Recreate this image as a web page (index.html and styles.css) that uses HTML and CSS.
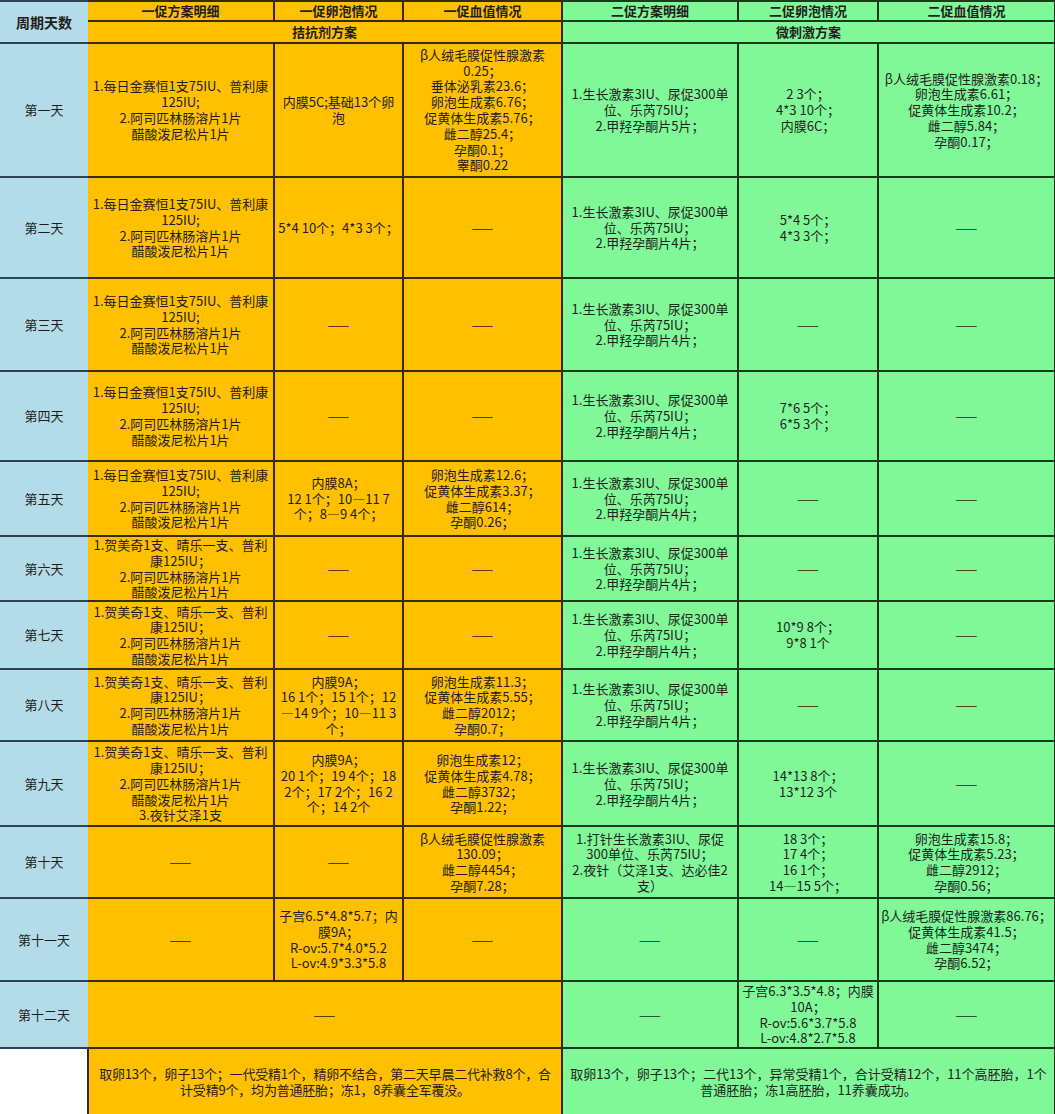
FILE: index.html
```html
<!DOCTYPE html>
<html lang="zh-CN">
<head>
<meta charset="utf-8">
<title>促排方案对比</title>
<link rel="stylesheet" href="styles.css">
</head>
<body>
<table class="sheet">
  <colgroup>
    <col class="w0"><col class="w1"><col class="w2"><col class="w3"><col class="w4"><col class="w5"><col class="w6">
  </colgroup>
  <tr class="rh1">
    <td class="day head" rowspan="2">周期天数</td>
    <td class="o head c1">一促方案明细</td>
    <td class="o head">一促卵泡情况</td>
    <td class="o head">一促血值情况</td>
    <td class="g head">二促方案明细</td>
    <td class="g head">二促卵泡情况</td>
    <td class="g head">二促血值情况</td>
  </tr>
  <tr class="rh2">
    <td class="o head c1" colspan="3">拮抗剂方案</td>
    <td class="g head" colspan="3">微刺激方案</td>
  </tr>
  <tr class="r1">
    <td class="day">第一天</td>
    <td class="o c1">1.每日金赛恒1支75IU、普利康<br>125IU;<br>2.阿司匹林肠溶片1片<br>醋酸泼尼松片1片</td>
    <td class="o">内膜5C;基础13个卵<br>泡</td>
    <td class="o">β人绒毛膜促性腺激素<br>0.25；<br>垂体泌乳素23.6；<br>卵泡生成素6.76；<br>促黄体生成素5.76；<br>雌二醇25.4；<br>孕酮0.1；<br>睾酮0.22</td>
    <td class="g">1.生长激素3IU、尿促300单<br>位、乐芮75IU；<br>2.甲羟孕酮片5片；</td>
    <td class="g">2 3个；<br>4*3 10个；<br>内膜6C；</td>
    <td class="g">β人绒毛膜促性腺激素0.18；<br>卵泡生成素6.61；<br>促黄体生成素10.2；<br>雌二醇5.84；<br>孕酮0.17；</td>
  </tr>
  <tr class="r2">
    <td class="day">第二天</td>
    <td class="o c1">1.每日金赛恒1支75IU、普利康<br>125IU;<br>2.阿司匹林肠溶片1片<br>醋酸泼尼松片1片</td>
    <td class="o">5*4 10个；4*3 3个；</td>
    <td class="o">——</td>
    <td class="g">1.生长激素3IU、尿促300单<br>位、乐芮75IU；<br>2.甲羟孕酮片4片；</td>
    <td class="g">5*4 5个；<br>4*3 3个；</td>
    <td class="g">——</td>
  </tr>
  <tr class="r3">
    <td class="day">第三天</td>
    <td class="o c1">1.每日金赛恒1支75IU、普利康<br>125IU;<br>2.阿司匹林肠溶片1片<br>醋酸泼尼松片1片</td>
    <td class="o">——</td>
    <td class="o">——</td>
    <td class="g">1.生长激素3IU、尿促300单<br>位、乐芮75IU；<br>2.甲羟孕酮片4片；</td>
    <td class="g">——</td>
    <td class="g">——</td>
  </tr>
  <tr class="r4">
    <td class="day">第四天</td>
    <td class="o c1">1.每日金赛恒1支75IU、普利康<br>125IU;<br>2.阿司匹林肠溶片1片<br>醋酸泼尼松片1片</td>
    <td class="o">——</td>
    <td class="o">——</td>
    <td class="g">1.生长激素3IU、尿促300单<br>位、乐芮75IU；<br>2.甲羟孕酮片4片；</td>
    <td class="g">7*6 5个；<br>6*5 3个；</td>
    <td class="g">——</td>
  </tr>
  <tr class="r5">
    <td class="day">第五天</td>
    <td class="o c1">1.每日金赛恒1支75IU、普利康<br>125IU;<br>2.阿司匹林肠溶片1片<br>醋酸泼尼松片1片</td>
    <td class="o">内膜8A；<br>12 1个；10—11 7<br>个；8—9 4个；</td>
    <td class="o">卵泡生成素12.6；<br>促黄体生成素3.37；<br>雌二醇614；<br>孕酮0.26；</td>
    <td class="g">1.生长激素3IU、尿促300单<br>位、乐芮75IU；<br>2.甲羟孕酮片4片；</td>
    <td class="g">——</td>
    <td class="g">——</td>
  </tr>
  <tr class="r6">
    <td class="day">第六天</td>
    <td class="o c1">1.贺美奇1支、晴乐一支、普利<br>康125IU；<br>2.阿司匹林肠溶片1片<br>醋酸泼尼松片1片</td>
    <td class="o">——</td>
    <td class="o">——</td>
    <td class="g">1.生长激素3IU、尿促300单<br>位、乐芮75IU；<br>2.甲羟孕酮片4片；</td>
    <td class="g">——</td>
    <td class="g">——</td>
  </tr>
  <tr class="r7">
    <td class="day">第七天</td>
    <td class="o c1">1.贺美奇1支、晴乐一支、普利<br>康125IU；<br>2.阿司匹林肠溶片1片<br>醋酸泼尼松片1片</td>
    <td class="o">——</td>
    <td class="o">——</td>
    <td class="g">1.生长激素3IU、尿促300单<br>位、乐芮75IU；<br>2.甲羟孕酮片4片；</td>
    <td class="g">10*9 8个；<br>9*8 1个</td>
    <td class="g">——</td>
  </tr>
  <tr class="r8">
    <td class="day">第八天</td>
    <td class="o c1">1.贺美奇1支、晴乐一支、普利<br>康125IU；<br>2.阿司匹林肠溶片1片<br>醋酸泼尼松片1片</td>
    <td class="o">内膜9A；<br>16 1个；15 1个；12<br>—14 9个；10—11 3<br>个；</td>
    <td class="o">卵泡生成素11.3；<br>促黄体生成素5.55；<br>雌二醇2012；<br>孕酮0.7；</td>
    <td class="g">1.生长激素3IU、尿促300单<br>位、乐芮75IU；<br>2.甲羟孕酮片4片；</td>
    <td class="g">——</td>
    <td class="g">——</td>
  </tr>
  <tr class="r9">
    <td class="day">第九天</td>
    <td class="o c1">1.贺美奇1支、晴乐一支、普利<br>康125IU；<br>2.阿司匹林肠溶片1片<br>醋酸泼尼松片1片<br>3.夜针艾泽1支</td>
    <td class="o">内膜9A；<br>20 1个；19 4个；18<br>2个；17 2个；16 2<br>个；14 2个</td>
    <td class="o">卵泡生成素12；<br>促黄体生成素4.78；<br>雌二醇3732；<br>孕酮1.22；</td>
    <td class="g">1.生长激素3IU、尿促300单<br>位、乐芮75IU；<br>2.甲羟孕酮片4片；</td>
    <td class="g">14*13 8个；<br>13*12 3个</td>
    <td class="g">——</td>
  </tr>
  <tr class="r10">
    <td class="day">第十天</td>
    <td class="o c1">——</td>
    <td class="o">——</td>
    <td class="o">β人绒毛膜促性腺激素<br>130.09；<br>雌二醇4454；<br>孕酮7.28；</td>
    <td class="g">1.打针生长激素3IU、尿促<br>300单位、乐芮75IU；<br>2.夜针（艾泽1支、达必佳2<br>支）</td>
    <td class="g">18 3个；<br>17 4个；<br>16 1个；<br>14—15 5个；</td>
    <td class="g">卵泡生成素15.8；<br>促黄体生成素5.23；<br>雌二醇2912；<br>孕酮0.56；</td>
  </tr>
  <tr class="r11">
    <td class="day">第十一天</td>
    <td class="o c1">——</td>
    <td class="o">子宫6.5*4.8*5.7；内<br>膜9A；<br>R-ov:5.7*4.0*5.2<br>L-ov:4.9*3.3*5.8</td>
    <td class="o">——</td>
    <td class="g">——</td>
    <td class="g">——</td>
    <td class="g">β人绒毛膜促性腺激素86.76；<br>促黄体生成素41.5；<br>雌二醇3474；<br>孕酮6.52；</td>
  </tr>
  <tr class="r12">
    <td class="day">第十二天</td>
    <td class="o c1" colspan="3">——</td>
    <td class="g">——</td>
    <td class="g">子宫6.3*3.5*4.8；内膜<br>10A；<br>R-ov:5.6*3.7*5.8<br>L-ov:4.8*2.7*5.8</td>
    <td class="g">——</td>
  </tr>
  <tr class="r13">
    <td class="blank"></td>
    <td class="o sum tight" colspan="3">取卵13个，卵子13个；一代受精1个，精卵不结合，第二天早晨二代补救8个，合<br>计受精9个，均为普通胚胎；冻1，8养囊全军覆没。</td>
    <td class="g sum" colspan="3">取卵13个，卵子13个；二代13个，异常受精1个，合计受精12个，11个高胚胎，1个<br>普通胚胎；冻1高胚胎，11养囊成功。</td>
  </tr>
</table>
</body>
</html>
```

FILE: styles.css
```css
html, body {
  margin: 0;
  padding: 0;
  background: #ffffff;
}

.sheet {
  width: 1055px;
  table-layout: fixed;
  border-collapse: collapse;
  font-family: "Noto Sans CJK SC", "Noto Sans", sans-serif;
  font-size: 13px;
  line-height: 15.8px;
  color: #1e1e1e;
}

.w0 { width: 88px; }
.w1 { width: 186px; }
.w2 { width: 129px; }
.w3 { width: 159px; }
.w4 { width: 176px; }
.w5 { width: 140px; }
.w6 { width: 177px; }

.sheet td {
  padding: 0;
  text-align: center;
  vertical-align: middle;
  white-space: nowrap;
  overflow: visible;
}

.o {
  background: #ffc000;
  border: 2px solid #3a2812;
}

.g {
  background: #80f898;
  border: 2px solid #173d18;
}

.day {
  background: #b4dce8;
  border-top: 2px solid #2c4350;
  border-bottom: 2px solid #2c4350;
  border-left-style: hidden;
}

.c1 {
  border-left-style: hidden;
}

.head {
  font-weight: 700;
  font-size: 13px;
  line-height: 16px;
}

.day.head {
  font-size: 14px;
}

.blank {
  background: #ffffff;
  border-left-style: hidden;
  border-bottom-style: hidden;
}

.sum {
  border-bottom-style: hidden;
}

.r13 .o.sum {
  border-left: 2px solid #3a2812;
}

.tight {
  letter-spacing: -0.2px;
}

.rh1 { height: 20px; }
.rh2 { height: 22px; }
.r1 { height: 134px; }
.r2 { height: 101px; }
.r3 { height: 93px; }
.r4 { height: 90px; }
.r5 { height: 75px; }
.r6 { height: 65px; }
.r7 { height: 68px; }
.r8 { height: 72px; }
.r9 { height: 85px; }
.r10 { height: 72px; }
.r11 { height: 83px; }
.r12 { height: 67px; }
.r13 { height: 67px; }
```
